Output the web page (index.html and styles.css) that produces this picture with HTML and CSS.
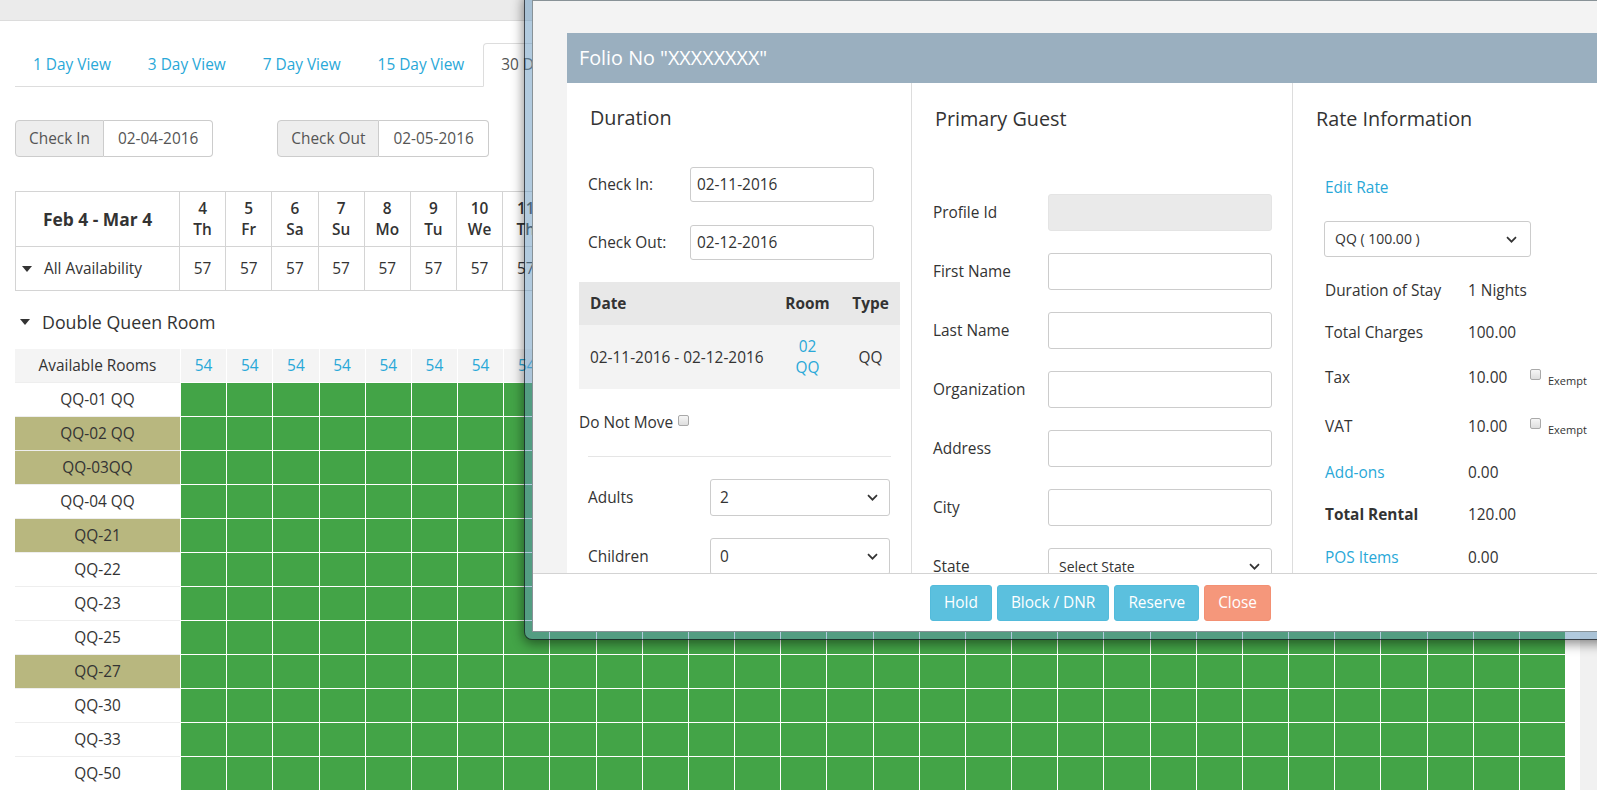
FILE: index.html
```html
<!DOCTYPE html>
<html lang="en">
<head>
<meta charset="utf-8">
<title>Reservation Calendar</title>
<link rel="stylesheet" href="styles.css">
</head>
<body>
<div class="page">
  <main class="main">
    <div class="topbar"></div>
    <div class="content">
      <ul class="tabs">
        <li><a>1 Day View</a></li>
        <li><a>3 Day View</a></li>
        <li><a>7 Day View</a></li>
        <li><a>15 Day View</a></li>
        <li class="active"><a>30 Day View</a></li>
      </ul>
      <div class="dates">
        <div class="igroup"><span class="addon">Check In</span><span class="ival">02-04-2016</span></div>
        <div class="igroup"><span class="addon">Check Out</span><span class="ival">02-05-2016</span></div>
      </div>
      <div class="cal">
        <div class="crow head">
          <div class="first range">Feb 4 - Mar 4</div>
          <div class="day"><span>4</span><span>Th</span></div><div class="day"><span>5</span><span>Fr</span></div><div class="day"><span>6</span><span>Sa</span></div><div class="day"><span>7</span><span>Su</span></div><div class="day"><span>8</span><span>Mo</span></div><div class="day"><span>9</span><span>Tu</span></div><div class="day"><span>10</span><span>We</span></div><div class="day"><span>11</span><span>Th</span></div><div class="day"><span>12</span><span>Fr</span></div><div class="day"><span>13</span><span>Sa</span></div>
          <div class="day"><span>14</span><span>Su</span></div><div class="day"><span>15</span><span>Mo</span></div><div class="day"><span>16</span><span>Tu</span></div><div class="day"><span>17</span><span>We</span></div><div class="day"><span>18</span><span>Th</span></div><div class="day"><span>19</span><span>Fr</span></div><div class="day"><span>20</span><span>Sa</span></div><div class="day"><span>21</span><span>Su</span></div><div class="day"><span>22</span><span>Mo</span></div><div class="day"><span>23</span><span>Tu</span></div>
          <div class="day"><span>24</span><span>We</span></div><div class="day"><span>25</span><span>Th</span></div><div class="day"><span>26</span><span>Fr</span></div><div class="day"><span>27</span><span>Sa</span></div><div class="day"><span>28</span><span>Su</span></div><div class="day"><span>29</span><span>Mo</span></div><div class="day"><span>1</span><span>Tu</span></div><div class="day"><span>2</span><span>We</span></div><div class="day"><span>3</span><span>Th</span></div><div class="day"><span>4</span><span>Fr</span></div>
        </div>
        <div class="crow avail">
          <div class="first"><i class="caret"></i>All Availability</div>
          <div>57</div><div>57</div><div>57</div><div>57</div><div>57</div><div>57</div><div>57</div><div>57</div><div>57</div><div>57</div>
          <div>57</div><div>57</div><div>57</div><div>57</div><div>57</div><div>57</div><div>57</div><div>57</div><div>57</div><div>57</div>
          <div>57</div><div>57</div><div>57</div><div>57</div><div>57</div><div>57</div><div>57</div><div>57</div><div>57</div><div>57</div>
        </div>
      </div>
      <h3 class="rtype"><i class="caret"></i>Double Queen Room</h3>
      <div class="grid">
        <div class="grow arooms"><div class="name">Available Rooms</div>
          <span>54</span><span>54</span><span>54</span><span>54</span><span>54</span><span>54</span><span>54</span><span>54</span><span>54</span><span>54</span>
          <span>54</span><span>54</span><span>54</span><span>54</span><span>54</span><span>54</span><span>54</span><span>54</span><span>54</span><span>54</span>
          <span>54</span><span>54</span><span>54</span><span>54</span><span>54</span><span>54</span><span>54</span><span>54</span><span>54</span><span>54</span>
        </div>
        <div class="grow"><div class="name">QQ-01 QQ</div><span></span><span></span><span></span><span></span><span></span><span></span><span></span><span></span><span></span><span></span><span></span><span></span><span></span><span></span><span></span><span></span><span></span><span></span><span></span><span></span><span></span><span></span><span></span><span></span><span></span><span></span><span></span><span></span><span></span><span></span></div>
        <div class="grow"><div class="name olive">QQ-02 QQ</div><span></span><span></span><span></span><span></span><span></span><span></span><span></span><span></span><span></span><span></span><span></span><span></span><span></span><span></span><span></span><span></span><span></span><span></span><span></span><span></span><span></span><span></span><span></span><span></span><span></span><span></span><span></span><span></span><span></span><span></span></div>
        <div class="grow"><div class="name olive">QQ-03QQ</div><span></span><span></span><span></span><span></span><span></span><span></span><span></span><span></span><span></span><span></span><span></span><span></span><span></span><span></span><span></span><span></span><span></span><span></span><span></span><span></span><span></span><span></span><span></span><span></span><span></span><span></span><span></span><span></span><span></span><span></span></div>
        <div class="grow"><div class="name">QQ-04 QQ</div><span></span><span></span><span></span><span></span><span></span><span></span><span></span><span></span><span></span><span></span><span></span><span></span><span></span><span></span><span></span><span></span><span></span><span></span><span></span><span></span><span></span><span></span><span></span><span></span><span></span><span></span><span></span><span></span><span></span><span></span></div>
        <div class="grow"><div class="name olive">QQ-21</div><span></span><span></span><span></span><span></span><span></span><span></span><span></span><span></span><span></span><span></span><span></span><span></span><span></span><span></span><span></span><span></span><span></span><span></span><span></span><span></span><span></span><span></span><span></span><span></span><span></span><span></span><span></span><span></span><span></span><span></span></div>
        <div class="grow"><div class="name">QQ-22</div><span></span><span></span><span></span><span></span><span></span><span></span><span></span><span></span><span></span><span></span><span></span><span></span><span></span><span></span><span></span><span></span><span></span><span></span><span></span><span></span><span></span><span></span><span></span><span></span><span></span><span></span><span></span><span></span><span></span><span></span></div>
        <div class="grow"><div class="name">QQ-23</div><span></span><span></span><span></span><span></span><span></span><span></span><span></span><span></span><span></span><span></span><span></span><span></span><span></span><span></span><span></span><span></span><span></span><span></span><span></span><span></span><span></span><span></span><span></span><span></span><span></span><span></span><span></span><span></span><span></span><span></span></div>
        <div class="grow"><div class="name">QQ-25</div><span></span><span></span><span></span><span></span><span></span><span></span><span></span><span></span><span></span><span></span><span></span><span></span><span></span><span></span><span></span><span></span><span></span><span></span><span></span><span></span><span></span><span></span><span></span><span></span><span></span><span></span><span></span><span></span><span></span><span></span></div>
        <div class="grow"><div class="name olive">QQ-27</div><span></span><span></span><span></span><span></span><span></span><span></span><span></span><span></span><span></span><span></span><span></span><span></span><span></span><span></span><span></span><span></span><span></span><span></span><span></span><span></span><span></span><span></span><span></span><span></span><span></span><span></span><span></span><span></span><span></span><span></span></div>
        <div class="grow"><div class="name">QQ-30</div><span></span><span></span><span></span><span></span><span></span><span></span><span></span><span></span><span></span><span></span><span></span><span></span><span></span><span></span><span></span><span></span><span></span><span></span><span></span><span></span><span></span><span></span><span></span><span></span><span></span><span></span><span></span><span></span><span></span><span></span></div>
        <div class="grow"><div class="name">QQ-33</div><span></span><span></span><span></span><span></span><span></span><span></span><span></span><span></span><span></span><span></span><span></span><span></span><span></span><span></span><span></span><span></span><span></span><span></span><span></span><span></span><span></span><span></span><span></span><span></span><span></span><span></span><span></span><span></span><span></span><span></span></div>
        <div class="grow"><div class="name">QQ-50</div><span></span><span></span><span></span><span></span><span></span><span></span><span></span><span></span><span></span><span></span><span></span><span></span><span></span><span></span><span></span><span></span><span></span><span></span><span></span><span></span><span></span><span></span><span></span><span></span><span></span><span></span><span></span><span></span><span></span><span></span></div>
      </div>
    </div>
  </main>
  <div class="scrollbar"></div>
</div>

<div class="window">
  <div class="win-inner">
    <div class="dlg-wrap">
      <div class="dlg-head">Folio No "XXXXXXXX"</div>
      <div class="dlg-body">
        <section class="col col1">
          <h4 class="ttl">Duration</h4>
          <div class="frow ci"><label>Check In:</label><input class="inp w184" type="text" value="02-11-2016"></div>
          <div class="frow co"><label>Check Out:</label><input class="inp w184" type="text" value="02-12-2016"></div>
          <div class="dtable">
            <div class="dt-head"><span class="c-date">Date</span><span>Room</span><span>Type</span></div>
            <div class="dt-body"><span class="c-date">02-11-2016 - 02-12-2016</span><span class="link">02<br>QQ</span><span>QQ</span></div>
          </div>
          <div class="dnm">Do Not Move<i class="cbox"></i></div>
          <hr class="sep">
          <div class="frow sel-row"><label class="wl">Adults</label><div class="sel w180"><span>2</span><svg class="chev" width="11" height="7" viewBox="0 0 11 7"><path d="M1 1.2l4.5 4.5 4.5-4.5"/></svg></div></div>
          <div class="frow sel-row"><label class="wl">Children</label><div class="sel w180"><span>0</span><svg class="chev" width="11" height="7" viewBox="0 0 11 7"><path d="M1 1.2l4.5 4.5 4.5-4.5"/></svg></div></div>
        </section>
        <section class="col col2">
          <h4 class="ttl">Primary Guest</h4>
          <div class="grows">
            <div class="frow first"><label>Profile Id</label><input class="inp w224 disabled" type="text" readonly></div>
            <div class="frow"><label>First Name</label><input class="inp w224" type="text"></div>
            <div class="frow"><label>Last Name</label><input class="inp w224" type="text"></div>
            <div class="frow"><label>Organization</label><input class="inp w224" type="text"></div>
            <div class="frow"><label>Address</label><input class="inp w224" type="text"></div>
            <div class="frow"><label>City</label><input class="inp w224" type="text"></div>
            <div class="frow"><label>State</label><div class="sel w224 state"><span>Select State</span><svg class="chev" width="11" height="7" viewBox="0 0 11 7"><path d="M1 1.2l4.5 4.5 4.5-4.5"/></svg></div></div>
          </div>
        </section>
        <section class="col col3">
          <h4 class="ttl">Rate Information</h4>
          <a class="edit link">Edit Rate</a>
          <div class="sel rate"><span>QQ ( 100.00 )</span><svg class="chev" width="11" height="7" viewBox="0 0 11 7"><path d="M1 1.2l4.5 4.5 4.5-4.5"/></svg></div>
          <div class="rrow r-first"><span class="k">Duration of Stay</span><span class="v">1 Nights</span></div>
          <div class="rrow"><span class="k">Total Charges</span><span class="v">100.00</span></div>
          <div class="rrow tall"><span class="k">Tax</span><span class="v">10.00</span><i class="cbox"></i><small>Exempt</small></div>
          <div class="rrow tall r-vat"><span class="k">VAT</span><span class="v">10.00</span><i class="cbox"></i><small>Exempt</small></div>
          <div class="rrow r-addon"><span class="k link">Add-ons</span><span class="v">0.00</span></div>
          <div class="rrow"><span class="k strong">Total Rental</span><span class="v">120.00</span></div>
          <div class="rrow r-pos"><span class="k link">POS Items</span><span class="v">0.00</span></div>
        </section>
      </div>
    </div>
    <div class="dlg-foot">
      <button class="btn">Hold</button>
      <button class="btn">Block / DNR</button>
      <button class="btn">Reserve</button>
      <button class="btn close">Close</button>
    </div>
  </div>
</div>
</body>
</html>
```

FILE: styles.css
```css
* { box-sizing: border-box; }

html, body {
  margin: 0;
  height: 790px;
  overflow: hidden;
}

body {
  position: relative;
  font-family: "Open Sans", "Liberation Sans", sans-serif;
  font-size: 15.4px;
  line-height: 22px;
  color: #333;
  background: #fff;
}

.link { color: #29a8d8; }

/* ---------- page ---------- */
.page { display: flex; height: 790px; }
.main { flex: 1; min-width: 0; }
.scrollbar { width: 17px; flex: none; background: #f1f1f1; }

.topbar {
  height: 21px;
  background: #ebebeb;
  border-bottom: 1px solid #dcdcdc;
}

.content { padding: 22px 15px 0; }

.tabs {
  list-style: none;
  margin: 0;
  padding: 0;
  display: flex;
  height: 44px;
  border-bottom: 1px solid #ddd;
}
.tabs li { margin-right: 2px; }
.tabs a {
  display: block;
  height: 44px;
  padding: 10px 16px 0 17px;
  line-height: 22px;
  color: #29a8d8;
  border: 1px solid transparent;
  border-radius: 4px 4px 0 0;
  white-space: nowrap;
}
.tabs .active a {
  color: #555;
  background: #fff;
  border-color: #ddd #ddd #fff;
}

.dates { display: flex; gap: 64px; margin-top: 33px; }
.igroup { display: flex; height: 37px; }
.addon {
  padding: 0 13px;
  line-height: 35px;
  background: #eee;
  border: 1px solid #ccc;
  border-radius: 4px 0 0 4px;
  color: #555;
}
.ival {
  padding: 0 14px;
  line-height: 35px;
  border: 1px solid #ccc;
  border-left: 0;
  border-radius: 0 4px 4px 0;
  color: #555;
}

.cal { margin-top: 34px; }
.crow { display: grid; grid-template-columns: 165px repeat(30, 1fr); }
.crow > div {
  display: flex;
  align-items: center;
  justify-content: center;
  text-align: center;
  border-right: 1px solid #d4d4d4;
  border-bottom: 1px solid #d4d4d4;
}
.crow > .first { border-left: 1px solid #d4d4d4; }
.head > div { border-top: 1px solid #d4d4d4; }
.head { height: 56px; }
.head .range { font-weight: 700; font-size: 17.4px; }
.head .day { flex-direction: column; font-weight: 600; line-height: 21px; }
.avail { height: 44px; }
.avail .first { justify-content: flex-start; padding-left: 6px; }

.caret {
  display: inline-block;
  width: 0;
  height: 0;
  border-left: 5.5px solid transparent;
  border-right: 5.5px solid transparent;
  border-top: 6px solid #333;
  margin-right: 12px;
}

.rtype {
  display: flex;
  align-items: center;
  margin: 19px 0 15px;
  padding-left: 5px;
  font-size: 17.8px;
  font-weight: 400;
  line-height: 24px;
}
.rtype .caret { margin-right: 12px; }

.grow { display: grid; grid-template-columns: 165px repeat(30, 1fr); height: 34px; }
.grow .name {
  display: flex;
  align-items: center;
  justify-content: center;
  border-top: 1px solid #eee;
}
.grow .name.olive { background: #b8b77f; }
.grow > span {
  background: #43a447;
  border-top: 1px solid #fff;
  border-left: 1px solid #fff;
}
.grow.arooms { height: 33px; background: #f4f4f4; }
.grow.arooms .name { border-top: 0; }
.grow.arooms > span {
  display: flex;
  align-items: center;
  justify-content: center;
  background: #f4f4f4;
  border-top: 0;
  color: #29a8d8;
}

/* ---------- window ---------- */
.window {
  position: absolute;
  left: 525px;
  top: -7px;
  width: 1200px;
  border: 7px solid rgba(100, 150, 190, 0.5);
  border-radius: 7px;
  background-clip: padding-box;
  box-shadow: 0 0 0 1px rgba(25, 35, 45, 0.75), 0 3px 12px 2px rgba(0, 0, 0, 0.45);
}
.win-inner {
  border: 1px solid rgba(30, 50, 60, 0.5);
  background: #f3f3f3;
}
.dlg-wrap { padding: 32px 0 0 34px; }
.dlg-head {
  height: 50px;
  padding-left: 12px;
  background: #9aafbf;
  color: #fff;
  font-size: 19.8px;
  line-height: 50px;
}
.dlg-body {
  display: flex;
  height: 490px;
  overflow: hidden;
  background: #fff;
}
.col { flex: none; }
.col1 { width: 345px; padding: 0 11px 0 12px; border-right: 1px solid #ddd; }
.col2 { width: 381px; padding-left: 21px; border-right: 1px solid #ddd; }
.col3 { flex: 1; padding-left: 23px; }

.ttl {
  margin: 24px 0 0;
  font-size: 19.8px;
  font-weight: 400;
  line-height: 22px;
}
.col1 .ttl { padding-left: 11px; }
.col2 .ttl { padding-left: 2px; margin-top: 25px; }
.col3 .ttl { margin-top: 25px; }

.frow { display: flex; align-items: center; margin-top: 22px; }
.col1 .frow { padding-left: 9px; }
.col1 .frow label { width: 102px; }
.col1 .frow.ci { margin-top: 38px; }
.col1 .frow.co { margin-top: 23px; }
.col1 .frow .wl { width: 122px; }

.inp {
  font: inherit;
  color: #333;
  height: 35px;
  padding: 0 6px;
  border: 1px solid #ccc;
  border-radius: 3px;
  background: #fff;
  outline: none;
}
.w184 { width: 184px; }
.w224 { width: 224px; }
.w180 { width: 180px; }
.col2 .inp { height: 37px; }
.inp.disabled { background: #eaeaea; border-color: #e4e4e4; }

.dtable { margin-top: 22px; }
.dt-head, .dt-body { display: grid; grid-template-columns: 196px 65px 61px; align-items: center; text-align: center; }
.dt-head { height: 43px; background: #e8e8e8; font-weight: 700; }
.dt-body { height: 64px; background: #f3f3f3; line-height: 21px; }
.dt-head .c-date, .dt-body .c-date { text-align: left; padding-left: 11px; }

.dnm { display: flex; align-items: center; margin-top: 23px; height: 22px; }
.cbox {
  display: inline-block;
  width: 11px;
  height: 11px;
  border: 1px solid #a9a9a9;
  border-radius: 2px;
  background: linear-gradient(#f6f6f6, #dedede);
}
.dnm .cbox { margin: -6px 0 0 5px; }

.sep { margin: 22px 9px 0; border: 0; border-top: 1px solid #e5e5e5; height: 0; }

.sel {
  display: flex;
  align-items: center;
  justify-content: space-between;
  height: 37px;
  padding: 0 11px 0 9px;
  border: 1px solid #ccc;
  border-radius: 3px;
  background: #fff;
}
.chev { fill: none; stroke: #333; stroke-width: 1.7; }

.col2 .frow label { width: 115px; }
.col2 .frow.first { margin-top: 64px; }
.sel.state { font-size: 14px; padding-left: 10px; padding-right: 11px; }

.edit { display: block; margin: 47px 0 0 9px; }
.sel.rate { width: 207px; height: 36px; margin: 22px 0 0 8px; padding-left: 10px; padding-right: 13px; font-size: 14px; }

.rrow { display: flex; align-items: center; height: 22px; margin-top: 20px; padding-left: 9px; }
.rrow.r-first { margin-top: 23px; }
.rrow.tall { height: 28px; }
.rrow.r-vat { margin-top: 21px; }
.rrow.r-addon { margin-top: 21px; }
.rrow.r-pos { margin-top: 21px; }
.rrow .k { width: 143px; }
.rrow .v { width: 62px; }
.rrow .strong { font-weight: 700; }
.rrow .cbox { margin-top: -7px; }
.rrow small { font-size: 11px; margin: 5px 0 0 7px; }

.dlg-foot {
  display: flex;
  gap: 5px;
  height: 58px;
  padding: 11px 0 0 397px;
  background: #fff;
  border-top: 1px solid #d3d3d3;
}
.btn {
  font: inherit;
  height: 36px;
  padding: 0 13px;
  color: #fff;
  background: #5bc0de;
  border: 1px solid #53bbdb;
  border-radius: 3px;
}
.btn.close { background: #f5977b; border-color: #f39073; }
```
